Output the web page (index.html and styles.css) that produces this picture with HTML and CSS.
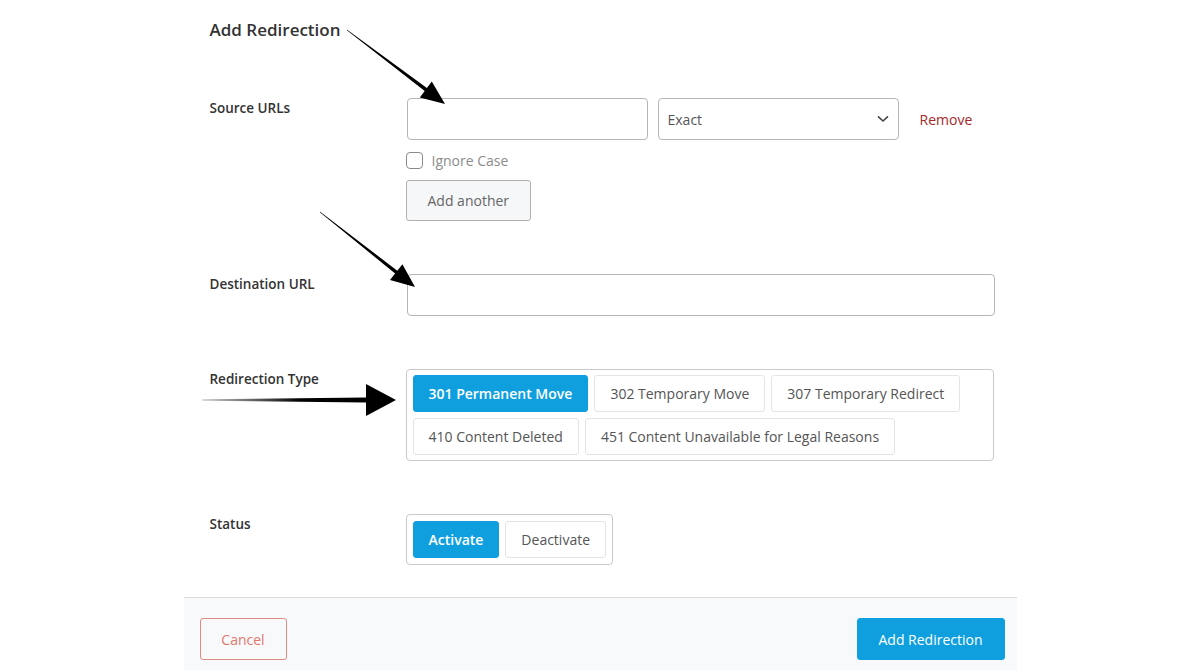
FILE: index.html
```html
<!DOCTYPE html>
<html>
<head>
<meta charset="utf-8">
<title>Add Redirection</title>
<link rel="stylesheet" href="styles.css">
</head>
<body>
<div class="page">
	<div class="wrap">
		<form class="form">
			<h2 class="form-title">Add Redirection</h2>

			<div class="row">
				<label class="row-label">Source URLs</label>
				<div class="row-body">
					<div class="source-line">
						<input type="text" class="input input-half">
						<div class="select input-half">
							<span>Exact</span>
							<svg width="12" height="8" viewBox="0 0 12 8"><path d="M1.5 1.8 L6 6 L10.5 1.8" fill="none" stroke="#444" stroke-width="1.6" stroke-linecap="round" stroke-linejoin="round"/></svg>
						</div>
						<a class="remove">Remove</a>
					</div>
					<label class="check">
						<span class="check-box"></span>
						<span>Ignore Case</span>
					</label>
					<button type="button" class="btn btn-light">Add another</button>
				</div>
			</div>

			<div class="row">
				<label class="row-label">Destination URL</label>
				<div class="row-body">
					<input type="text" class="input input-full">
				</div>
			</div>

			<div class="row">
				<label class="row-label">Redirection Type</label>
				<div class="row-body">
					<div class="choice choice-wide">
						<span class="chip active">301 Permanent Move</span>
						<span class="chip">302 Temporary Move</span>
						<span class="chip">307 Temporary Redirect</span>
						<span class="chip">410 Content Deleted</span>
						<span class="chip">451 Content Unavailable for Legal Reasons</span>
					</div>
				</div>
			</div>

			<div class="row">
				<label class="row-label">Status</label>
				<div class="row-body">
					<div class="choice choice-status">
						<span class="chip active">Activate</span>
						<span class="chip">Deactivate</span>
					</div>
				</div>
			</div>
		</form>

		<footer class="form-foot">
			<button type="button" class="btn btn-cancel">Cancel</button>
			<button type="button" class="btn btn-primary">Add Redirection</button>
		</footer>
	</div>

	<!-- annotation arrows drawn over the form -->
	<svg class="arrows" width="1200" height="670" viewBox="0 0 1200 670">
		<defs>
			<linearGradient id="fade" x1="202" y1="0" x2="300" y2="0" gradientUnits="userSpaceOnUse">
				<stop offset="0" stop-color="#d0d0d0"/>
				<stop offset="1" stop-color="#000"/>
			</linearGradient>
		</defs>
		<polygon points="347.15,29.8 426.9,88.1 431.8,81.5 445,104 419.8,97.5 424.7,90.9 346.85,30.2" fill="#000"/>
		<polygon points="320.15,211.8 397.3,270.7 402.4,264.2 415,287 390,280 395.1,273.5 319.85,212.2" fill="#000"/>
		<polygon points="202,399.2 366,397.6 366,384 396,400 366,416 366,402.4 202,400.8" fill="url(#fade)"/>
	</svg>
</div>
</body>
</html>
```

FILE: styles.css
```css
html, body {
	margin: 0;
	background: #fff;
}
body {
	font-family: "Open Sans", "Noto Sans", Arial, sans-serif;
	font-size: 14px;
	color: #333;
}
.page {
	position: relative;
	height: 670px;
	overflow: hidden;
}
.wrap {
	width: 833px;
	margin: 0 auto;
}
.form {
	padding: 18px 0 0 26px;
}
.form-title {
	margin: 0 0 56px;
	font-size: 17px;
	font-weight: 600;
	line-height: 24px;
	color: #333;
}
.row {
	display: flex;
	margin-bottom: 53px;
}
.row:last-child {
	margin-bottom: 32px;
}
.row-label {
	width: 197px;
	flex: none;
	line-height: 20px;
	font-weight: 600;
	font-size: 13.5px;
}
.row-body {
	flex: 1;
}
.source-line {
	display: flex;
	align-items: center;
}
.input {
	box-sizing: border-box;
	height: 42px;
	border: 1px solid #b5b5b5;
	border-radius: 4px;
	background: #fff;
	font: inherit;
	padding: 0 9px;
	margin: 0;
}
.input-half {
	width: 241px;
}
.input-full {
	width: 588px;
}
.select {
	box-sizing: border-box;
	height: 42px;
	margin-left: 10px;
	padding: 0 9px;
	display: flex;
	align-items: center;
	justify-content: space-between;
	border: 1px solid #b5b5b5;
	border-radius: 4px;
	color: #555;
}
.remove {
	margin-left: 21px;
	color: #a52828;
	cursor: pointer;
}
.check {
	display: flex;
	align-items: center;
	gap: 9px;
	margin: 10px 0 10px -1px;
	height: 20px;
	color: #8c8c8c;
}
.check-box {
	box-sizing: border-box;
	width: 17px;
	height: 17px;
	border: 1px solid #8a8a8a;
	border-radius: 4px;
}
.btn {
	box-sizing: border-box;
	height: 42px;
	padding: 0 20px;
	font: inherit;
	font-size: 14px;
	border-radius: 3px;
	cursor: pointer;
}
.btn-light {
	margin-left: -1px;
	height: 41px;
	padding: 0 21px;
	background: #f6f7f8;
	border: 1px solid #b0b0b0;
	color: #666;
}
.choice {
	display: inline-flex;
	flex-wrap: wrap;
	gap: 6px;
	padding: 5px 6px;
	border: 1px solid #c9c9c9;
	border-radius: 4px;
	margin-left: -1px;
}
.choice-wide {
	box-sizing: border-box;
	width: 588px;
}
.choice-status {
	padding: 6px;
}
.chip {
	box-sizing: border-box;
	height: 37px;
	padding: 0 15px;
	display: flex;
	align-items: center;
	border: 1px solid #e4e4e4;
	border-radius: 3px;
	color: #555;
	font-weight: 500;
	white-space: nowrap;
}
.chip.active {
	background: #0f9fdf;
	border-color: #0f9fdf;
	color: #fff;
	font-weight: 600;
}
.form-foot {
	display: flex;
	justify-content: space-between;
	align-items: flex-start;
	height: 100px;
	padding: 20px 12px 0 16px;
	box-sizing: border-box;
	background: #f8f9fa;
	border-top: 1px solid #dcdcdc;
}
.btn-cancel {
	width: 87px;
	padding: 0;
	background: transparent;
	border: 1px solid #e08a84;
	color: #e0786e;
}
.btn-primary {
	width: 148px;
	padding: 0;
	background: #0f9fdf;
	border: 1px solid #0f9fdf;
	color: #fff;
}
.arrows {
	position: absolute;
	left: 0;
	top: 0;
	pointer-events: none;
}
```
